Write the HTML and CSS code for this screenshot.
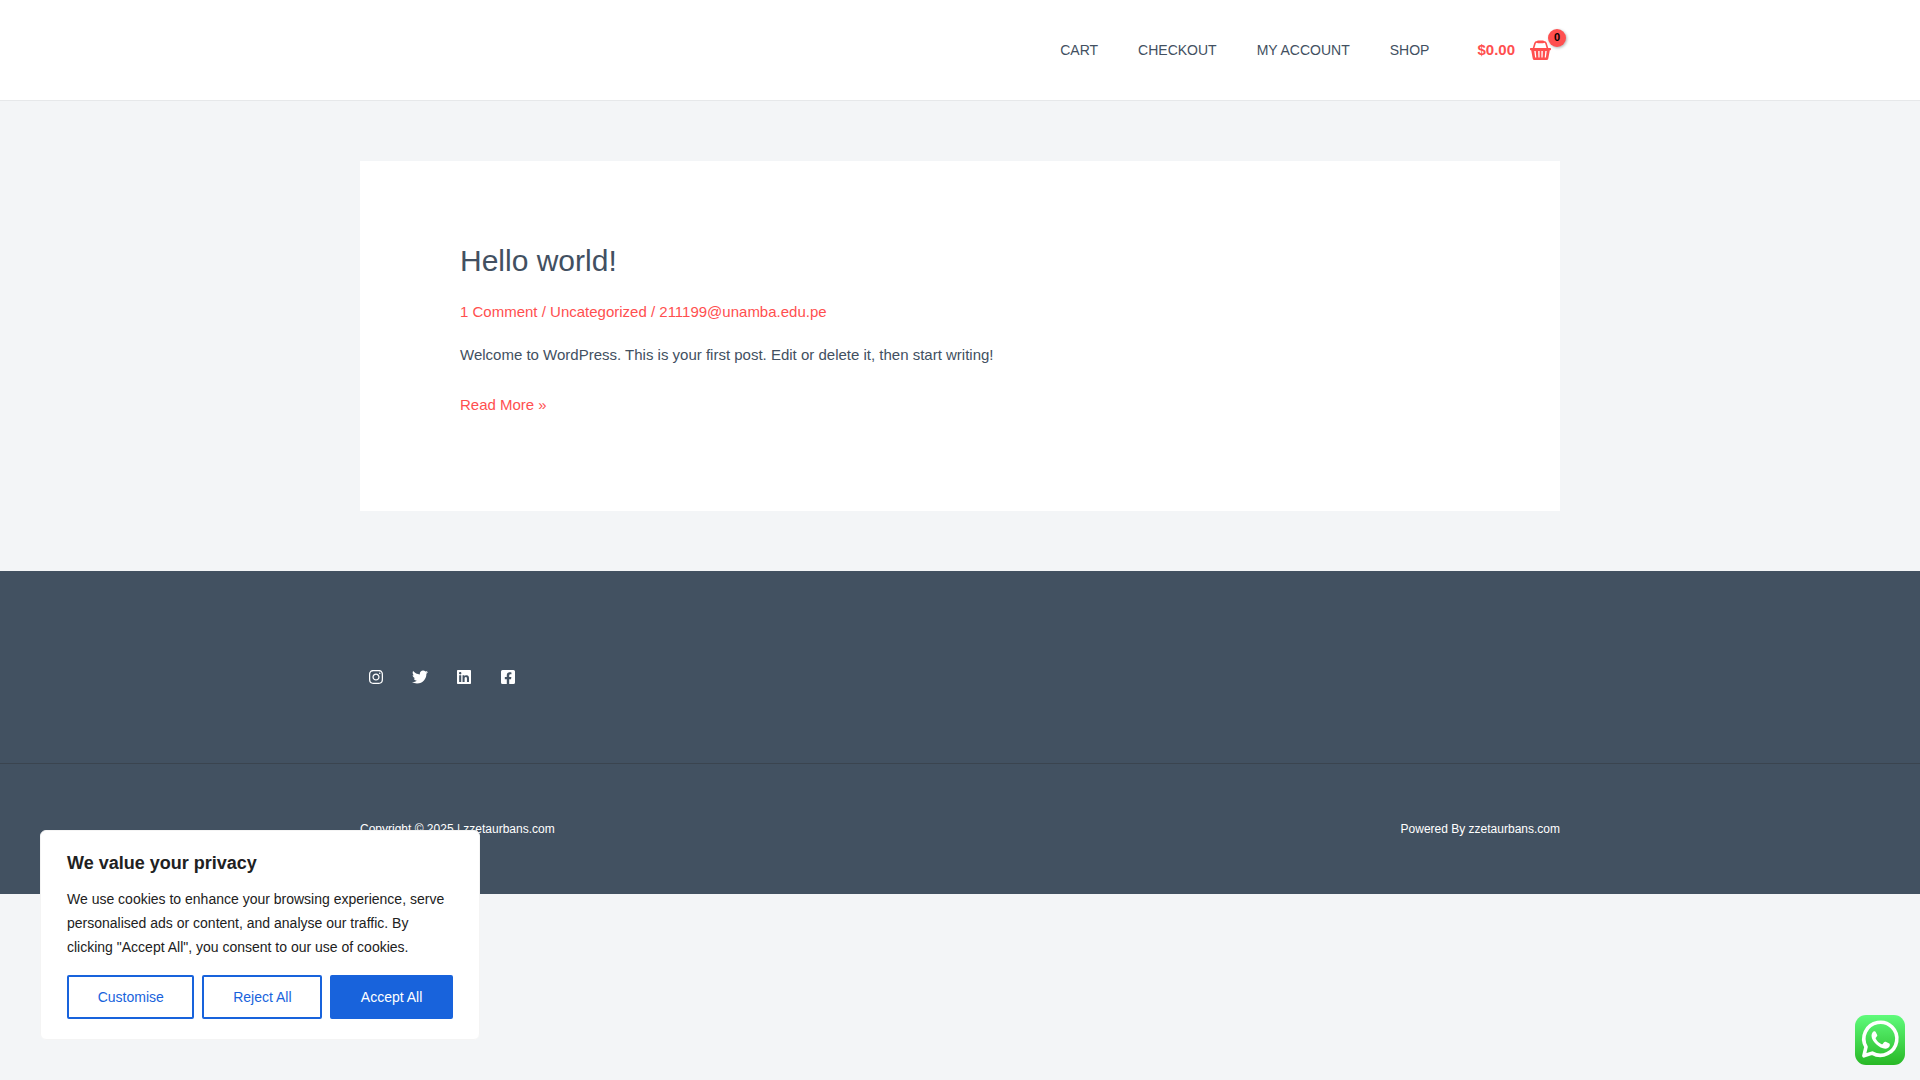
FILE: index.html
```html
<!DOCTYPE html>
<html lang="en">
<head>
<meta charset="utf-8">
<meta name="viewport" content="width=device-width, initial-scale=1">
<title>zzetaurbans.com</title>
<link rel="stylesheet" href="styles.css">
</head>
<body>
<header class="site-header">
  <div class="container header-inner">
    <nav class="main-nav" aria-label="Main">
      <a href="#cart">CART</a>
      <a href="#checkout">CHECKOUT</a>
      <a href="#account">MY ACCOUNT</a>
      <a href="#shop">SHOP</a>
    </nav>
    <a class="cart-link" href="#cart">
      <span class="cart-total">$0.00</span>
      <span class="cart-icon">
        <svg viewBox="0 0 21 20" width="21" height="20" aria-hidden="true">
          <path d="M3.300 9 5 3.300Q5.500 1.900 7 1.900H14Q15.500 1.900 16 3.300L17.700 9" fill="none" stroke="currentColor" stroke-width="1.600"/>
          <rect x="7" y="0.500" width="7" height="2.800" rx="1" fill="currentColor"/>
          <path fill="currentColor" fill-rule="evenodd" d="M.6 8H20.400Q21 8 21 8.700V9.600Q21 10.300 20.300 10.300H19.800L18.300 18.500Q18 20 16.600 20H4.400Q3 20 2.700 18.500L1.200 10.300H.7Q0 10.300 0 9.600V8.700Q0 8 .6 8ZM4.300 11 5.100 17.500H6.300L5.700 11ZM8.200 11 8.400 17.500H9.600V11ZM11.400 11V17.500H12.600L12.800 11ZM15.300 11 14.700 17.500H15.900L16.700 11Z"/>
        </svg>
        <span class="cart-count">0</span>
      </span>
    </a>
  </div>
</header>

<main class="container content">
  <article class="post">
    <h2 class="post-title"><a href="#post">Hello world!</a></h2>
    <div class="post-meta"><a href="#comments">1 Comment</a> / <a href="#category">Uncategorized</a> / <a href="#author">211199@unamba.edu.pe</a></div>
    <p class="post-text">Welcome to WordPress. This is your first post. Edit or delete it, then start writing!</p>
    <p class="post-more"><a href="#post">Read More »</a></p>
  </article>
</main>

<footer class="site-footer">
  <div class="footer-social">
    <div class="container social-list">
      <a href="#instagram" aria-label="Instagram"><svg viewBox="0 0 448 512"><path d="M224.100 141c-63.600 0-114.900 51.300-114.900 114.900s51.300 114.900 114.900 114.900S339 319.500 339 255.900 287.700 141 224.100 141zm0 189.600c-41.100 0-74.700-33.500-74.700-74.700s33.500-74.700 74.700-74.700 74.700 33.500 74.700 74.700-33.600 74.700-74.700 74.700zm146.400-194.300c0 14.900-12 26.800-26.800 26.800-14.900 0-26.800-12-26.800-26.800s12-26.800 26.800-26.800 26.800 12 26.800 26.800zm76.100 27.200c-1.700-35.900-9.900-67.700-36.200-93.900-26.200-26.200-58-34.400-93.900-36.200-37-2.100-147.900-2.100-184.900 0-35.800 1.700-67.600 9.900-93.900 36.100s-34.400 58-36.200 93.900c-2.100 37-2.100 147.900 0 184.900 1.700 35.900 9.900 67.700 36.200 93.900s58 34.400 93.900 36.200c37 2.100 147.900 2.100 184.900 0 35.900-1.700 67.700-9.900 93.900-36.200 26.200-26.200 34.400-58 36.200-93.900 2.100-37 2.100-147.800 0-184.800zM398.800 388c-7.800 19.600-22.900 34.700-42.600 42.600-29.500 11.700-99.500 9-132.100 9s-102.700 2.600-132.100-9c-19.600-7.800-34.700-22.900-42.600-42.600-11.700-29.500-9-99.500-9-132.100s-2.600-102.700 9-132.100c7.800-19.600 22.900-34.700 42.600-42.600 29.500-11.700 99.500-9 132.100-9s102.700-2.600 132.100 9c19.600 7.800 34.700 22.900 42.600 42.600 11.700 29.500 9 99.500 9 132.100s2.700 102.700-9 132.100z"/></svg></a>
      <a href="#twitter" aria-label="Twitter"><svg viewBox="0 0 512 512"><path d="M459.370 151.716c.325 4.548.325 9.097.325 13.645 0 138.720-105.583 298.558-298.558 298.558-59.452 0-114.680-17.219-161.137-47.106 8.447.974 16.568 1.299 25.340 1.299 49.055 0 94.213-16.568 130.274-44.832-46.132-.975-84.792-31.188-98.112-72.772 6.498.974 12.995 1.624 19.818 1.624 9.421 0 18.843-1.300 27.614-3.573-48.081-9.747-84.143-51.980-84.143-102.985v-1.299c13.969 7.797 30.214 12.670 47.431 13.319-28.264-18.843-46.781-51.005-46.781-87.391 0-19.492 5.197-37.360 14.294-52.954 51.655 63.675 129.300 105.258 216.365 109.807-1.624-7.797-2.599-15.918-2.599-24.040 0-57.828 46.782-104.934 104.934-104.934 30.213 0 57.502 12.670 76.670 33.137 23.715-4.548 46.456-13.320 66.599-25.340-7.798 24.366-24.366 44.833-46.132 57.827 21.117-2.273 41.584-8.122 60.426-16.243-14.292 20.791-32.161 39.308-52.628 54.253z"/></svg></a>
      <a href="#linkedin" aria-label="LinkedIn"><svg viewBox="0 0 448 512"><path d="M416 32H31.900C14.300 32 0 46.500 0 64.300v383.400C0 465.500 14.300 480 31.900 480H416c17.600 0 32-14.500 32-32.300V64.300c0-17.800-14.400-32.300-32-32.300zM135.400 416H69V202.200h66.500V416zm-33.200-243c-21.300 0-38.500-17.300-38.500-38.500S80.900 96 102.200 96c21.200 0 38.500 17.300 38.500 38.500 0 21.300-17.200 38.500-38.500 38.500zm282.100 243h-66.400V312c0-24.800-.5-56.700-34.500-56.700-34.600 0-39.900 27-39.900 54.900V416h-66.400V202.200h63.700v29.200h.9c8.900-16.800 30.600-34.500 62.900-34.500 67.200 0 79.700 44.300 79.700 101.900V416z"/></svg></a>
      <a href="#facebook" aria-label="Facebook"><svg viewBox="0 0 448 512"><path d="M400 32H48A48 48 0 0 0 0 80v352a48 48 0 0 0 48 48h137.250V327.690h-63V256h63v-54.640c0-62.150 37-96.480 93.670-96.480 27.140 0 55.520 4.840 55.520 4.840v61h-31.270c-30.810 0-40.420 19.120-40.420 38.730V256h68.780l-11 71.690h-57.780V480H400a48 48 0 0 0 48-48V80a48 48 0 0 0-48-48z"/></svg></a>
    </div>
  </div>
  <div class="container footer-bar">
    <span>Copyright © 2025 | zzetaurbans.com</span>
    <span>Powered By zzetaurbans.com</span>
  </div>
</footer>

<section class="consent" aria-labelledby="consent-title">
  <h2 class="consent-title" id="consent-title">We value your privacy</h2>
  <p class="consent-text">We use cookies to enhance your browsing experience, serve personalised ads or content, and analyse our traffic. By clicking "Accept All", you consent to our use of cookies.</p>
  <div class="consent-actions">
    <button type="button">Customise</button>
    <button type="button">Reject All</button>
    <button type="button" class="primary">Accept All</button>
  </div>
</section>

<a class="whatsapp" href="#whatsapp" aria-label="WhatsApp">
  <svg viewBox="0 0 50 50" width="50" height="50">
    <defs><linearGradient id="wa" x1="0" y1="0" x2="0" y2="1"><stop offset="0" stop-color="#5ffb7b"/><stop offset="1" stop-color="#28b826"/></linearGradient></defs>
    <rect width="50" height="50" rx="11" fill="url(#wa)"/>
    <path d="M8.900 40.800 11 31.900A16.500 16.500 0 1 1 17.200 38.100Z" fill="none" stroke="#fff" stroke-width="3.600" stroke-linejoin="round"/>
    <path fill="#fff" d="M19.200 16.200C18.300 16.300 16.500 18 16.500 20.800C16.500 24 19 27.200 21.200 29.300C24 32 27.400 33.700 30.200 33.700C32.500 33.700 34.500 32 34.800 30.400C34.900 29.400 34.800 28.900 34.300 28.600L30.700 26.800C30 26.500 29.500 26.700 29 27.300L27.700 28.900C27.300 29.400 26.900 29.400 26.300 29.100C23.900 28 22.100 26.300 20.900 24.100C20.500 23.400 20.600 23 21 22.500L22.100 21.100C22.400 20.700 22.400 20.300 22.200 19.900L20.700 16.900C20.400 16.200 19.900 16.100 19.200 16.200Z"/>
  </svg>
</a>
</body>
</html>
```
FILE: styles.css
```css
* { box-sizing: border-box; }

body {
  margin: 0;
  background: #f3f5f7;
  color: #425061;
  font-family: "Liberation Sans", Arial, sans-serif;
  font-size: 15px;
  line-height: 28px;
}

a { color: #ff4f4f; text-decoration: none; }
h2, p { margin: 0; }

.container {
  width: 100%;
  max-width: 1240px;
  margin: 0 auto;
  padding: 0 20px;
}

/* Header */
.site-header { background: #fff; border-bottom: 1px solid #e6e8ea; }

.header-inner {
  display: flex;
  align-items: center;
  justify-content: flex-end;
  gap: 48px;
  min-height: 100px;
}

.main-nav { display: flex; flex-wrap: wrap; gap: 0 40px; font-size: 14px; }
.main-nav a { color: #425061; }

.cart-link {
  display: flex;
  align-items: center;
  gap: 15px;
  padding-right: 9px;
}

.cart-total { font-weight: 700; }
.cart-icon { position: relative; display: flex; }

.cart-count {
  position: absolute;
  top: -11px;
  right: -15px;
  width: 18px;
  height: 18px;
  border-radius: 50%;
  background: #ff4f4f;
  box-shadow: 1px 1px 3px rgba(0, 0, 0, 0.3);
  color: #000;
  font-size: 11px;
  font-weight: 700;
  line-height: 17px;
  text-align: center;
}

/* Post */
.content { padding-top: 60px; padding-bottom: 60px; }
.post { background: #fff; padding: 80px 100px 92px; }

.post-title {
  margin-bottom: 18px;
  font-size: 30px;
  font-weight: 400;
  line-height: 39px;
}

.post-title a { color: #425061; }
.post-meta { margin-bottom: 15px; color: #ff4f4f; }
.post-text { margin-bottom: 22px; }

/* Footer */
.site-footer { background: #425161; color: #fff; }
.footer-social { padding: 92px 0 72px; border-bottom: 1px solid #3a444f; }

.social-list { display: flex; gap: 28px; padding-left: 28px; }
.social-list a { display: flex; align-items: center; justify-content: center; width: 16px; height: 28px; }
.social-list svg { height: 16px; fill: #fff; }

.footer-bar {
  display: flex;
  flex-wrap: wrap;
  justify-content: space-between;
  padding-top: 51px;
  padding-bottom: 51px;
  font-size: 12px;
}

/* Cookie consent */
.consent {
  position: fixed;
  bottom: 40px;
  left: 40px;
  width: 440px;
  max-width: calc(100% - 80px);
  padding: 20px 26px;
  border: 1px solid #f4f4f4;
  border-radius: 6px;
  background: #fff;
  color: #212121;
}

.consent-title { margin-bottom: 12px; font-size: 18px; line-height: 24px; }
.consent-text { margin-bottom: 16px; font-size: 14px; line-height: 24px; }
.consent-actions { display: flex; gap: 8px; }

.consent-actions button {
  flex: 1 1 auto;
  padding: 8px 28px;
  border: 2px solid #1863dc;
  border-radius: 2px;
  background: transparent;
  color: #1863dc;
  font: 14px/24px "Liberation Sans", Arial, sans-serif;
}

.consent-actions .primary { background: #1863dc; color: #fff; }

/* Chat button */
.whatsapp { position: fixed; right: 15px; bottom: 15px; display: flex; }
```
